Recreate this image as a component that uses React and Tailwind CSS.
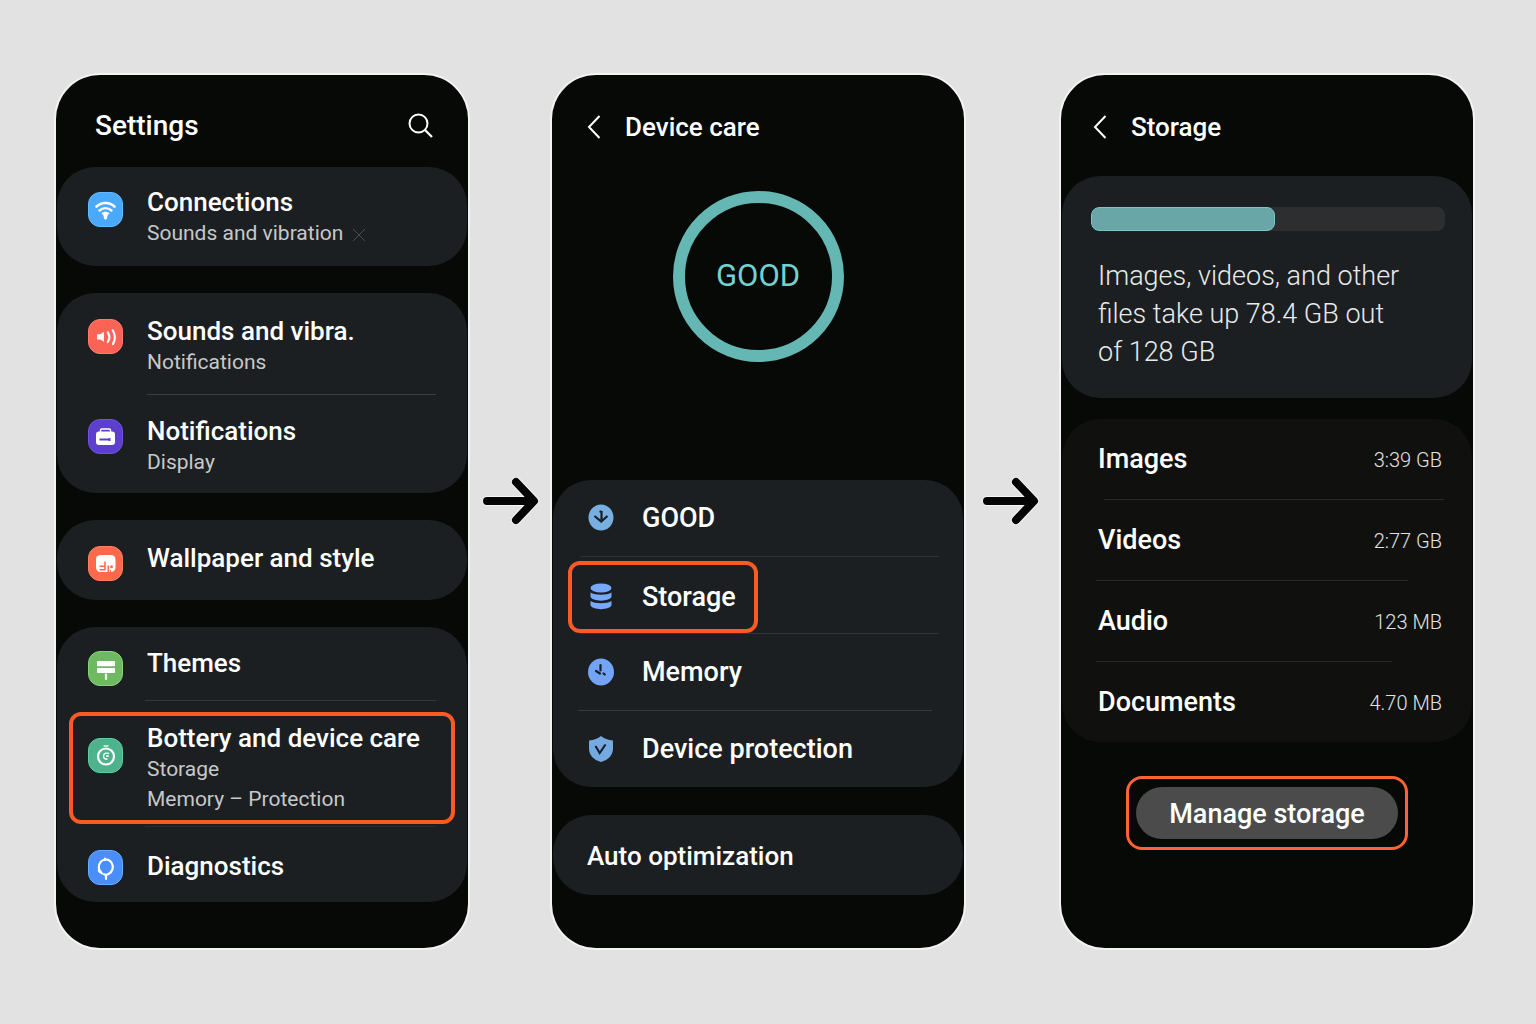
import clsx from "clsx";

const arrowPath = "M5 24h46M34 5l18 19-18 19";

/* ---------- Icons ---------- */

function Tile({ className, children }) {
    return (
        <span className={clsx("flex size-[35px] shrink-0 rounded-xl border", className)}>
            <svg viewBox="0 0 33 33" className="size-full" aria-hidden="true">
                {children}
            </svg>
        </span>
    );
}

function ConnectionsIcon() {
    return (
        <Tile className="bg-[#4aa9fb] border-[#62bbff]">
            <g fill="none" stroke="#fff" strokeLinecap="round">
                <path d="M7.5 13.500c5-4.600 13-4.600 18 0" strokeWidth="2.600" />
                <path d="M10.500 17.500c3.500-3.200 8.500-3.200 12 0" strokeWidth="2.400" />
            </g>
            <path d="M12.500 20.300c2.300-2 5.700-2 8 0l-2 2.200-.5 3.300-1.500 1-1.500-1-.5-3.300z" fill="#fff" />
        </Tile>
    );
}

function SoundsIcon() {
    return (
        <Tile className="bg-[#fb6355] border-[#ff7c6c]">
            <path d="M8 14.300h3.300l3.700-2.500v10l-3.700-2.300H8z" fill="#fff" />
            <g fill="none" stroke="#fff" strokeWidth="2.200" strokeLinecap="round">
                <path d="M18.800 12.500c2 2.800 2 6.500 0 9.500" />
                <path d="M23.800 10.500c2.600 4 2.600 9 .2 13.500" />
            </g>
        </Tile>
    );
}

function NotificationsIcon() {
    return (
        <Tile className="bg-[#5c3fce] border-[#6f52e0]">
            <path d="M11.500 13v-2.700c0-.8.5-1.300 1.300-1.300h7.400c.8 0 1.300.5 1.300 1.300V13" fill="none" stroke="#fff" strokeWidth="1.400" />
            <rect x="7" y="11.500" width="19" height="13.500" rx="3" fill="#fff" />
            <path d="M10.500 19.500h11M20.500 18v3" stroke="#5c3fce" strokeWidth="1.800" />
        </Tile>
    );
}

function WallpaperIcon() {
    return (
        <Tile className="bg-[#fd6a4b] border-[#ff8060]">
            <rect x="7" y="8" width="19.500" height="17" rx="4.500" fill="#fff" />
            <path d="M10.500 19.300h5.500M10.500 22.800h5.500M16 14.500v8.700M19.300 18.500v6.500" fill="none" stroke="#fd6a4b" strokeWidth="1.600" />
            <circle cx="22.500" cy="19.800" r="1.500" fill="#fd6a4b" />
            <path d="M21.500 23v2" fill="none" stroke="#fd6a4b" />
        </Tile>
    );
}

function ThemesIcon() {
    return (
        <Tile className="bg-[#6fb963] border-[#86d678]">
            <rect x="8" y="9" width="18" height="5.300" rx=".8" fill="#fff" />
            <rect x="8" y="16" width="18" height="5" rx=".8" fill="#fff" />
            <path d="M17 22.500v4.500" stroke="#fff" strokeWidth="2.200" strokeLinecap="round" />
        </Tile>
    );
}

function BatteryIcon() {
    return (
        <Tile className="bg-[#4db38c] border-[#62cba2]">
            <g fill="none" stroke="#fff">
                <circle cx="17" cy="17.500" r="8" strokeWidth="2.200" />
                <path d="M14.500 7h5" strokeWidth="1.300" />
                <path d="M20 14.500c-3-1-5.500 0-5.500 2.700 0 2.300 2 3.300 4 2.600M17 17h2.800" strokeWidth="1.400" />
            </g>
        </Tile>
    );
}

function DiagnosticsIcon() {
    return (
        <Tile className="bg-[#4a8efb] border-[#64adff]">
            <g fill="none" stroke="#fff" strokeWidth="2.200" strokeLinecap="round">
                <path d="M13 22.300a7 7.500 0 1 1 6.500.600l-2.500 1.200-2-.8" />
                <path d="M9.800 19.500l1.200 1.700M16 7.500v1.500M17 24v4" />
            </g>
        </Tile>
    );
}

function SearchIcon() {
    return (
        <svg viewBox="0 0 25 25" className="size-[25px]" fill="none" stroke="#fff" strokeWidth="2" aria-hidden="true">
            <circle cx="10.500" cy="10.500" r="9" />
            <path d="M17 17l7 7" strokeWidth="2.300" />
        </svg>
    );
}

function BackIcon() {
    return (
        <svg viewBox="0 0 14 24" className="h-6 w-3.5" fill="none" stroke="#fff" strokeWidth="2" aria-hidden="true">
            <path d="M12.500 1L2 12l10.500 11" />
        </svg>
    );
}

function CareIcon({ children }) {
    return (
        <svg viewBox="0 0 26 28" className="h-7 w-[26px] shrink-0" aria-hidden="true">
            {children}
        </svg>
    );
}

function GoodIcon() {
    return (
        <CareIcon>
            <ellipse cx="13" cy="13.500" rx="12.500" ry="13" fill="#78aee0" />
            <path d="M13.500 7v10M11.500 7.500h2M6.500 12l6.700 5.500 6.300-5.500" fill="none" stroke="#15202b" strokeWidth="2.200" />
        </CareIcon>
    );
}

function StorageIcon() {
    return (
        <CareIcon>
            <g fill="#76aaf8">
                <ellipse cx="13" cy="5" rx="10.500" ry="4.500" />
                <path d="M2.500 9.500c4.500 3 16.500 3 21 0v4c-1 5.500-20 5.500-21 0z" />
                <path d="M2.500 18c4.500 3 16.500 3 21 0v4c-1 5.500-20 5.500-21 0z" />
            </g>
        </CareIcon>
    );
}

function MemoryIcon() {
    return (
        <CareIcon>
            <ellipse cx="13" cy="14" rx="13" ry="13.500" fill="#74a4f6" />
            <path d="M12.500 7v5.500M8 13l4 2.500M15.500 15.500l1.300 1" fill="none" stroke="#15202b" strokeWidth="2.200" strokeLinecap="round" />
        </CareIcon>
    );
}

function ShieldIcon() {
    return (
        <CareIcon>
            <path d="M13 1c3 2.600 7 4 12 4.500v8c0 6.500-4.500 11.500-12 13.500C5.500 25 1 20 1 13.500v-8C6 5 10 3.600 13 1z" fill="#74aae0" />
            <path d="M7.500 11l4.200 7L17.500 9.500" fill="none" stroke="#15202b" strokeWidth="2.200" />
        </CareIcon>
    );
}

function StepArrow({ className }) {
    return (
        <div className={clsx("flex shrink-0 items-center pb-5", className)}>
            <svg viewBox="0 0 57 48" className="h-12 w-[57px]" fill="none" strokeLinecap="round" strokeLinejoin="round" aria-hidden="true">
                <path d={arrowPath} stroke="#f6f6f6" strokeWidth="10" />
                <path d={arrowPath} stroke="#050505" strokeWidth="8" />
            </svg>
        </div>
    );
}

/* ---------- Shared pieces ---------- */

function Phone({ children }) {
    return (
        <section className="flex min-w-0 flex-1 flex-col rounded-[44px] bg-[#070906] px-px ring-2 ring-white/60">
            {children}
        </section>
    );
}

function Card({ className, children }) {
    return <div className={clsx("rounded-[38px] bg-[#1c1f22]", className)}>{children}</div>;
}

function BackHeader({ title, className }) {
    return (
        <header className={clsx("flex items-center gap-6 pt-9", className)}>
            <button aria-label="Back" className="flex">
                <BackIcon />
            </button>
            <h1 className="text-[26px] leading-8 font-medium">{title}</h1>
        </header>
    );
}

function SettingRow({ icon, title, lines = [], className, iconClass }) {
    return (
        <a href="#" className={clsx("flex items-start gap-6", className)}>
            <span className={iconClass}>{icon}</span>
            <span className="min-w-0">
                <span className="block text-[26px] leading-8 font-medium whitespace-nowrap">{title}</span>
                {lines.map((line, i) => (
                    <span key={i} className="flex items-center gap-2.5 text-[21px] leading-[30px] whitespace-nowrap text-[#c6c8c9]">
                        {line}
                    </span>
                ))}
            </span>
        </a>
    );
}

function CareRow({ icon, title, highlighted }) {
    const content = (
        <>
            {icon}
            <span>{title}</span>
        </>
    );
    return (
        <a href="#" className={clsx("flex h-[76px]", highlighted ? "items-end pl-[15px]" : "items-center pl-[35px]")}>
            {highlighted ? (
                <span className="flex h-[72px] items-center gap-7 rounded-xl border-4 border-[#fb5a22] pr-[18px] pl-4">{content}</span>
            ) : (
                <span className="flex items-center gap-7">{content}</span>
            )}
        </a>
    );
}

/* ---------- Screens ---------- */

function SettingsScreen() {
    return (
        <Phone>
            <header className="flex h-[92px] items-center justify-between pt-2.5 pr-[34px] pl-[38px]">
                <h1 className="text-[28px] leading-8 font-medium">Settings</h1>
                <button aria-label="Search">
                    <SearchIcon />
                </button>
            </header>
            <div className="flex flex-col gap-[27px] pb-[46px]">
                <Card>
                    <SettingRow
                        icon={<ConnectionsIcon />}
                        title="Connections"
                        lines={[
                            <>
                                Sounds and vibration
                                <svg viewBox="0 0 12 12" className="mt-1 size-3" stroke="#4b4e51" aria-hidden="true">
                                    <path d="M0 0l12 12M12 0L0 12" />
                                </svg>
                            </>,
                        ]}
                        className="px-[31px] pt-[19px] pb-[18px]"
                        iconClass="pt-1.5"
                    />
                </Card>
                <Card>
                    <SettingRow icon={<SoundsIcon />} title="Sounds and vibra." lines={["Notifications"]} className="px-[31px] pt-[22px] pb-[17px]" iconClass="pt-1" />
                    <hr className="mr-[31px] ml-[90px] border-[#3a3d40]" />
                    <SettingRow icon={<NotificationsIcon />} title="Notifications" lines={["Display"]} className="px-[31px] pt-5 pb-4" iconClass="pt-1" />
                </Card>
                <Card>
                    <SettingRow icon={<WallpaperIcon />} title="Wallpaper and style" className="px-[31px] pt-[22px] pb-[19px]" iconClass="pt-1" />
                </Card>
                <Card>
                    <SettingRow icon={<ThemesIcon />} title="Themes" className="px-[31px] pt-5 pb-3.5" iconClass="pt-1" />
                    <hr className="mr-[31px] ml-[88px] border-[#34373a]" />
                    <SettingRow
                        icon={<BatteryIcon />}
                        title="Bottery and device care"
                        lines={["Storage", "Memory – Protection"]}
                        className="mx-3 mt-[11px] mb-0.5 rounded-xl border-4 border-[#fb5a22] px-[15px] py-1.5"
                        iconClass="pt-4"
                    />
                    <hr className="mr-[31px] ml-[88px] border-[#292c2f]" />
                    <SettingRow icon={<DiagnosticsIcon />} title="Diagnostics" className="px-[31px] pt-[23px] pb-[17px]" />
                </Card>
            </div>
        </Phone>
    );
}

function DeviceCareScreen() {
    return (
        <Phone>
            <BackHeader title="Device care" className="px-[34px]" />
            <div className="flex flex-col items-center pt-12 pb-[118px]">
                <div className="flex size-[171px] items-center justify-center rounded-full border-12 border-[#65b7b4] text-[31px] text-[#73d1d0]">
                    GOOD
                </div>
            </div>
            <Card className="text-[27px] leading-8 font-medium">
                <CareRow icon={<GoodIcon />} title="GOOD" />
                <hr className="mr-6 ml-[27px] border-[#303336]" />
                <CareRow icon={<StorageIcon />} title="Storage" highlighted />
                <hr className="mr-6 ml-[27px] border-[#303336]" />
                <CareRow icon={<MemoryIcon />} title="Memory" />
                <hr className="mr-[31px] ml-[25px] border-[#37393c]" />
                <CareRow icon={<ShieldIcon />} title="Device protection" />
            </Card>
            <Card className="mt-7 mb-[53px]">
                <a href="#" className="flex h-20 items-center px-[34px] pt-0.5 text-[26px] leading-8 font-medium">
                    Auto optimization
                </a>
            </Card>
        </Phone>
    );
}

const categories = [
    { name: "Images", size: "3:39 GB", line: "ml-[42px] mr-7" },
    { name: "Videos", size: "2:77 GB", line: "ml-[34px] mr-16" },
    { name: "Audio", size: "123 MB", line: "ml-[34px] mr-20" },
    { name: "Documents", size: "4.70 MB" },
];

function StorageScreen() {
    const used = 52;

    return (
        <Phone>
            <BackHeader title="Storage" className="px-[31px]" />
            <Card className="mt-[33px] pt-[31px] pr-[27px] pb-[27px] pl-[29px]">
                <div role="progressbar" aria-label="Storage used" aria-valuenow={used} className="h-6 overflow-hidden rounded-lg bg-[#2d2e30]">
                    <div className="h-full rounded-lg border border-[#7ec4c5] bg-[#69a6a8]" style={{ width: `${used}%` }} />
                </div>
                <p className="mt-[26px] pl-[7px] text-[27px] leading-[38px] font-light text-[#e9eaea]">
                    Images, videos, and other
                    <br />
                    files take up 78.4 GB out
                    <br />
                    of 128 GB
                </p>
            </Card>
            <ul className="mt-[21px] rounded-[38px] bg-[#10110f]">
                {categories.map((item) => (
                    <li key={item.name}>
                        <a href="#" className="flex h-20 items-center justify-between pr-[30px] pl-9">
                            <span className="text-[27px] leading-8 font-medium">{item.name}</span>
                            <span className="pt-0.5 text-xl font-light text-[#e2e2e2]">{item.size}</span>
                        </a>
                        {item.line && <hr className={clsx("border-[#292b2a]", item.line)} />}
                    </li>
                ))}
            </ul>
            <div className="flex justify-center pt-[34px] pb-[98px]">
                <div className="rounded-2xl border-3 border-[#fd6335] px-[7px] py-2">
                    <button className="h-[52px] rounded-full bg-[#4b4b4b] px-[33px] pt-0.5 text-[27px] leading-8 font-medium">Manage storage</button>
                </div>
            </div>
        </Phone>
    );
}

export default function App() {
    return (
        <main className="flex min-h-screen items-center bg-[#e2e2e2] pr-[63px] pb-0.5 pl-14 font-['Roboto',sans-serif] text-white">
            <div className="flex w-full items-stretch">
                <SettingsScreen />
                <StepArrow className="w-[84px] pl-3.5" />
                <DeviceCareScreen />
                <StepArrow className="w-[97px] pl-[18px]" />
                <StorageScreen />
            </div>
        </main>
    );
}
